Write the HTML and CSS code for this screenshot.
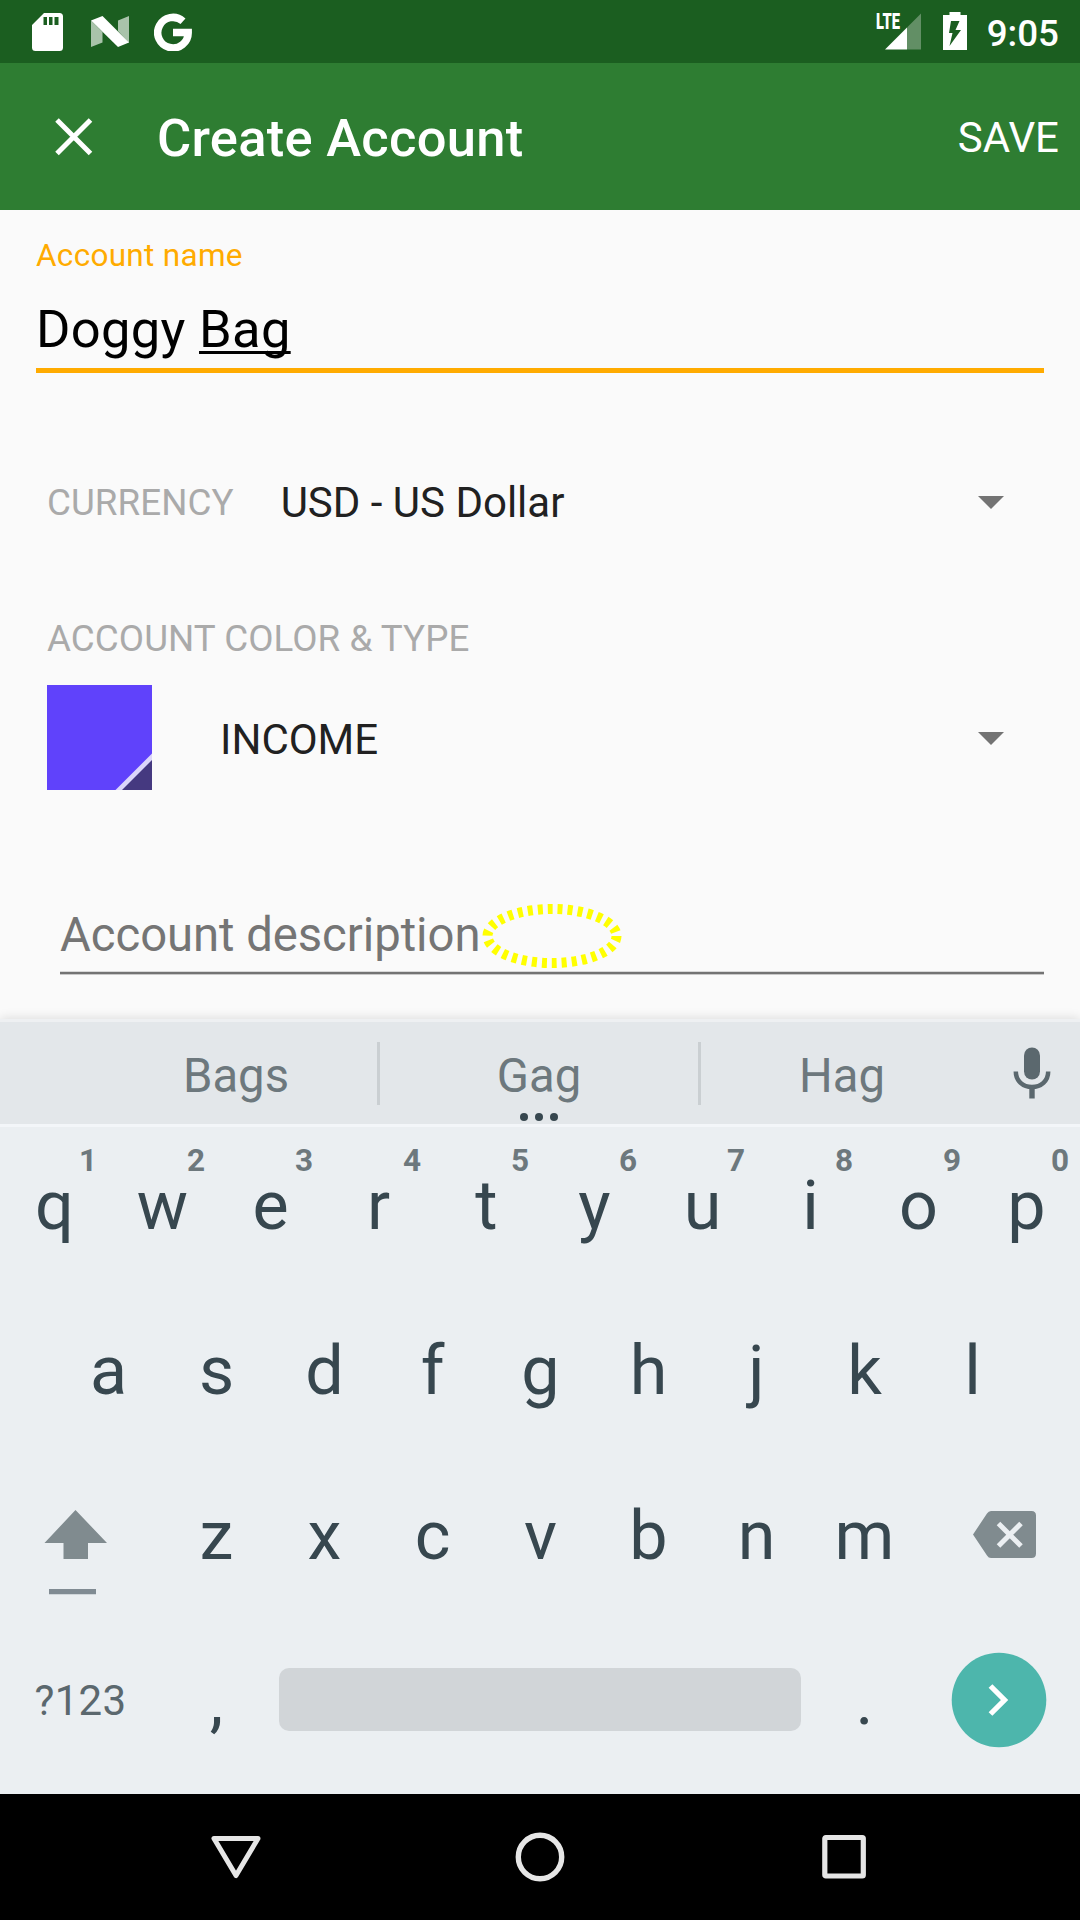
FILE: index.html
```html
<!DOCTYPE html>
<html lang="en">
<head>
<meta charset="utf-8">
<title>Create Account</title>
<link rel="stylesheet" href="styles.css">
</head>
<body>
<div class="screen">
  <header class="status-bar">
    <div class="status-left">
      <svg class="icon-sd" width="31" height="38" viewBox="0 0 31 38"><path fill="#fff" fill-rule="evenodd" d="M12 0H27.500Q31 0 31 3.500V34.500Q31 38 27.500 38H3.500Q0 38 0 34.500V12ZM11.500 4V12H15V4ZM17 4V12H20.500V4ZM22.500 4V12H26.500V4Z"/></svg>
      <svg class="icon-n" width="38" height="31" viewBox="0 0 38 31"><path fill="#a9c3aa" d="M0 4.500L11.500 16V26.500L0 31ZM27 4.500L38 0V27L27 15Z"/><path fill="#fff" d="M0 4.500L11.500 0L38 26.500L27 31Z"/></svg>
      <svg class="icon-g" width="38" height="38" viewBox="0 0 38 38"><path fill="none" stroke="#fff" stroke-width="7.500" d="M29 8.200A15.250 15.250 0 1 0 34.200 19.500H19"/></svg>
    </div>
    <div class="status-right">
      <svg class="icon-signal" width="46" height="37" viewBox="0 0 46 37"><path fill="#628f65" d="M31 14.500L45 0.500V36.500H31Z"/><path fill="#fff" d="M9 36.500L31 14.500V36.500Z"/><text class="lte" x="0" y="16" textLength="24" lengthAdjust="spacingAndGlyphs">LTE</text></svg>
      <svg class="icon-battery" width="24" height="38" viewBox="0 0 24 38"><path fill="#fff" fill-rule="evenodd" d="M6.500 0H17.500V3H24V38H0V3H6.500ZM8 9L6 21H9.500L6.500 34L18 18H12.500L16.500 9Z"/></svg>
      <span class="clock">9:05</span>
    </div>
  </header>

  <div class="app-bar">
    <svg class="icon-close" width="38" height="38" viewBox="0 0 38 38"><path stroke="#fff" stroke-width="5" d="M2 2L35.500 35.500M35.500 2L2 35.500"/></svg>
    <h1 class="title">Create Account</h1>
    <span class="save">SAVE</span>
  </div>

  <main class="form">
    <div class="field-name">
      <label class="field-label">Account name</label>
      <div class="field-value">Doggy <span class="composing">Bag</span></div>
    </div>
    <div class="currency-row">
      <span class="caption">CURRENCY</span>
      <span class="spinner-value">USD - US Dollar</span>
      <svg class="caret" width="26" height="13" viewBox="0 0 26 13"><path fill="#737373" d="M0 0H26L13 13Z"/></svg>
    </div>
    <div class="caption type-caption">ACCOUNT COLOR &amp; TYPE</div>
    <div class="type-row">
      <svg class="swatch" width="105" height="105" viewBox="0 0 105 105"><path fill="#6042fb" d="M0 0H105V105H0Z"/><path fill="#453980" d="M105 71V105H71Z"/><path fill="#dcd6fb" d="M105 68.500V75L75 105H68.500Z"/></svg>
      <span class="spinner-value">INCOME</span>
      <svg class="caret" width="26" height="13" viewBox="0 0 26 13"><path fill="#737373" d="M0 0H26L13 13Z"/></svg>
    </div>
    <div class="field-description">
      <span>Account description</span>
      <svg class="marker" width="140" height="64" viewBox="0 0 140 64"><ellipse cx="70" cy="32" rx="64.500" ry="27" fill="none" stroke="#ff0" stroke-width="10" stroke-dasharray="5 5"/></svg>
    </div>
  </main>

  <section class="keyboard">
    <div class="suggestions">
      <span class="suggestion">Bags</span>
      <span class="divider"></span>
      <span class="suggestion suggestion-main">Gag
        <svg class="more" width="38" height="8" viewBox="0 0 38 8"><g fill="#37474f"><circle cx="4" cy="4" r="4"/><circle cx="19" cy="4" r="4"/><circle cx="34" cy="4" r="4"/></g></svg>
      </span>
      <span class="divider"></span>
      <span class="suggestion">Hag</span>
      <svg class="icon-mic" width="38" height="52" viewBox="0 0 38 52"><rect x="11" y="0.500" width="16" height="32" rx="8" fill="#5b686e"/><path fill="none" stroke="#5b686e" stroke-width="4.500" d="M2.800 24.500C2.800 34 10 40 19 40S35.200 34 35.200 24.500"/><path fill="#5b686e" d="M16.300 40H21.700V51.500H16.300Z"/></svg>
    </div>
    <div class="keys">
      <div class="key-row">
        <span class="key">q<sup class="hint">1</sup></span><span class="key">w<sup class="hint">2</sup></span><span class="key">e<sup class="hint">3</sup></span><span class="key">r<sup class="hint">4</sup></span><span class="key">t<sup class="hint">5</sup></span><span class="key">y<sup class="hint">6</sup></span><span class="key">u<sup class="hint">7</sup></span><span class="key">i<sup class="hint">8</sup></span><span class="key">o<sup class="hint">9</sup></span><span class="key">p<sup class="hint">0</sup></span>
      </div>
      <div class="key-row">
        <span class="key">a</span><span class="key">s</span><span class="key">d</span><span class="key">f</span><span class="key">g</span><span class="key">h</span><span class="key">j</span><span class="key">k</span><span class="key">l</span>
      </div>
      <div class="key-row">
        <span class="key key-shift"><svg width="64" height="86" viewBox="0 0 64 86"><path fill="#808b8f" d="M31.500 0L63 33H44V49H19.500V33H0.500Z"/><path fill="#808b93" d="M5 79H52V84.300H5Z"/></svg></span>
        <span class="key">z</span><span class="key">x</span><span class="key">c</span><span class="key">v</span><span class="key">b</span><span class="key">n</span><span class="key">m</span>
        <span class="key key-delete"><svg width="63" height="48" viewBox="0 0 63 48"><path fill="#808b8f" d="M18 0H58.500Q63 0 63 4.500V42.500Q63 47 58.500 47H18Q15.500 47 14 44.500L0 23.500L14 2.500Q15.500 0 18 0Z"/><path stroke="#ebeff2" stroke-width="5" d="M25.500 12.500L48 35M48 12.500L25.500 35"/></svg></span>
      </div>
      <div class="key-row">
        <span class="key key-symbols">?123</span>
        <span class="key">,</span>
        <span class="key-space"></span>
        <span class="key">.</span>
        <span class="key key-go"><svg width="96" height="96" viewBox="0 0 96 96"><ellipse cx="48" cy="48" rx="47.300" ry="47.300" fill="#4db6ac"/><path fill="none" stroke="#fff" stroke-width="5.300" d="M39.500 34L53.500 48L39.500 62"/></svg></span>
      </div>
    </div>
  </section>

  <nav class="nav-bar">
    <svg width="50" height="50" viewBox="0 0 50 50"><path fill="none" stroke="#e6e6e6" stroke-width="5" stroke-linejoin="round" d="M3 6.500H47L25 43.500Z"/></svg>
    <svg width="50" height="50" viewBox="0 0 50 50"><circle cx="25" cy="25" r="21.700" fill="none" stroke="#e6e6e6" stroke-width="5.400"/></svg>
    <svg width="50" height="50" viewBox="0 0 50 50"><rect x="5.800" y="5.500" width="38.500" height="38.500" rx="1" fill="none" stroke="#e6e6e6" stroke-width="5.200"/></svg>
  </nav>
</div>
</body>
</html>
```
FILE: styles.css
```css
* { box-sizing: border-box; }
body { margin: 0; font-family: Roboto, sans-serif; }
svg { display: block; flex: none; }

.screen {
  width: 1080px;
  height: 1920px;
  display: flex;
  flex-direction: column;
  background: #fafafa;
  overflow: hidden;
}

/* Status bar */
.status-bar {
  height: 63px;
  padding: 0 21px 0 32px;
  display: flex;
  justify-content: space-between;
  align-items: center;
  background: #1b5e20;
}
.status-left, .status-right { display: flex; align-items: center; }
.icon-n { margin-left: 28px; }
.icon-g { margin-left: 25px; }
.icon-signal { overflow: visible; }
.icon-battery { margin: 0 0 1px 21px; }
.lte { font: 900 21.5px Roboto, sans-serif; fill: #fff; }
.clock {
  margin: 5px 0 0 20px;
  font-size: 36.75px;
  font-weight: 500;
  line-height: 44px;
  color: #fff;
}

/* App bar */
.app-bar {
  height: 147px;
  padding: 0 21px 0 55px;
  display: flex;
  align-items: center;
  background: #2e7d32;
  color: #fff;
}
.title {
  flex: 1;
  margin: 3px 0 0 64px;
  font-size: 52.5px;
  font-weight: 500;
  line-height: 62px;
  letter-spacing: 0.26px;
}
.save { margin-top: 2px; font-size: 42px; line-height: 50px; }

/* Form */
.form { height: 809px; padding: 27px 36px 0; }
.field-name { height: 136px; border-bottom: 5px solid #ffab00; }
.field-label {
  display: block;
  font-size: 31.5px;
  line-height: 38px;
  letter-spacing: 0.3px;
  color: #ffab00;
}
.field-value {
  margin-top: 24px;
  font-size: 52.5px;
  line-height: 60px;
  letter-spacing: 0.3px;
  color: #000;
}
.composing {
  text-decoration: underline 3px;
  text-decoration-skip-ink: none;
  text-underline-offset: 4px;
}
.currency-row, .type-row {
  display: flex;
  align-items: center;
  padding: 0 40px 0 11px;
}
.currency-row { height: 60px; margin-top: 100px; }
.caption {
  font-size: 36.75px;
  line-height: 44px;
  letter-spacing: 0.06px;
  color: #aaa;
}
.spinner-value { flex: 1; font-size: 42px; line-height: 50px; color: #212121; }
.currency-row .spinner-value { margin-left: 47px; }
.currency-row .caret { margin-bottom: 2px; }
.type-caption { margin: 84px 0 24px 11px; }
.type-row { height: 105px; }
.type-row .spinner-value { margin: 4px 0 0 68px; }
.type-row .caret { margin-top: 2px; }
.field-description {
  position: relative;
  margin: 114px 0 0 24px;
  height: 70px;
  padding-top: 1px;
  border-bottom: 2px solid #737373;
  box-shadow: 0 1px 0 #c8c8c8, inset 0 -1px 0 #d8d8d8;
  font-size: 47.25px;
  line-height: 60px;
  letter-spacing: -0.05px;
  color: #757575;
}
.marker { position: absolute; left: 422px; top: 0; }

/* Keyboard */
.keyboard {
  height: 775px;
  background: #ebeff2;
  border-top: 3px solid #eef0f2;
  box-shadow: 0 -1px 10px rgba(0, 0, 0, 0.12);
}
.suggestions {
  height: 105px;
  padding: 0 11px 0 95px;
  display: flex;
  align-items: center;
  background: #e3e7ea;
  border-bottom: 3px solid #f3f6f9;
}
.suggestion {
  position: relative;
  width: 282px;
  padding-top: 7px;
  text-align: center;
  font-size: 47.25px;
  line-height: 95px;
  color: #6d787d;
}
.suggestion-main { width: 318px; }
.more { position: absolute; left: calc(50% - 19px); bottom: 3px; }
.divider { width: 3px; height: 63px; margin-top: 1px; background: #cacfd2; }
.icon-mic { margin: 0 18px 0 30px; }

.key-row {
  height: 165px;
  display: flex;
  justify-content: center;
}
.key {
  position: relative;
  width: 108px;
  padding: 29px 0 0 1px;
  text-align: center;
  font-size: 68.25px;
  line-height: 100px;
  color: #37474f;
}
.hint {
  position: absolute;
  right: 11px;
  top: 15px;
  font-size: 31.5px;
  font-weight: 700;
  line-height: 38px;
  color: #6d787d;
}
.key-shift, .key-delete { width: 162px; }
.key-shift { padding: 53px 0 0 44px; }
.key-delete { padding: 54px 0 0 55px; }
.key-symbols {
  width: 162px;
  font-size: 42px;
  letter-spacing: 0.3px;
  padding: 29px 1px 0 0;
  color: #5b686e;
}
.key-space {
  width: 522px;
  height: 63px;
  margin: 46px 9px 0;
  border-radius: 10px;
  background: #d1d5d8;
}
.key-go { width: 162px; padding: 30px 0 0 33px; }

/* Navigation bar */
.nav-bar {
  height: 126px;
  display: flex;
  justify-content: center;
  align-items: center;
  gap: 254px;
  background: #000;
}
```
